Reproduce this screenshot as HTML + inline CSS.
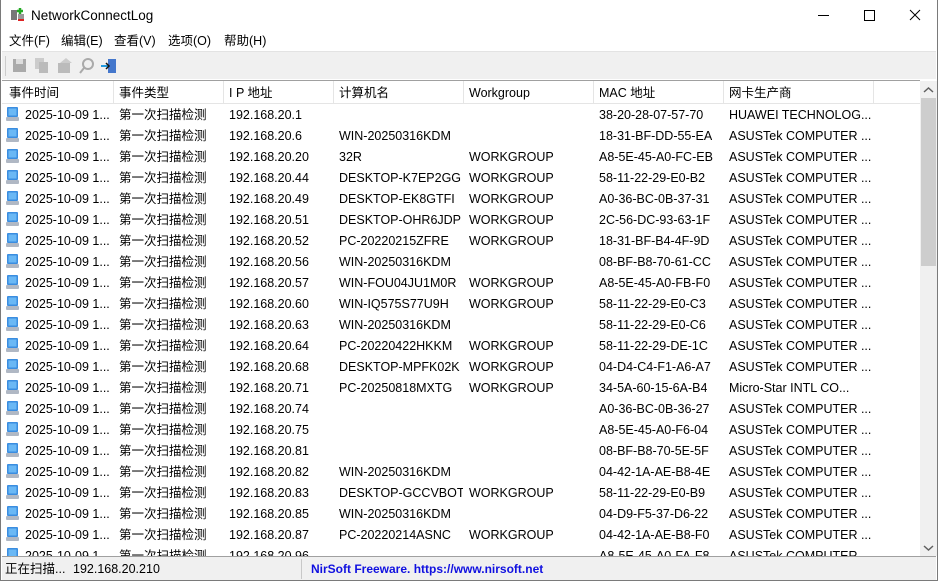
<!DOCTYPE html>
<html><head><meta charset="utf-8"><style>
*{margin:0;padding:0;box-sizing:border-box}
body{width:938px;height:581px;overflow:hidden;background:#fff;font-family:"Liberation Sans","Noto Sans CJK SC",sans-serif;font-size:12.5px;line-height:15px;color:#000;position:relative}
.win{position:absolute;left:0;top:0;width:938px;height:581px;border-right:1px solid #7a7a7a;border-left:1px solid #7a7a7a;border-bottom:1px solid #7a7a7a}
.title{position:absolute;left:30px;top:8px;font-size:13.5px}
.menu span{position:absolute;top:34px;font-size:12.5px}
.tb{position:absolute;left:1px;right:1px;top:51px;height:28px;background:#f0f0f0;border-top:1px solid #e3e3e3}
.list{position:absolute;left:1px;top:80px;width:918px;height:476px;overflow:hidden;border-top:1px solid #a0a0a0}
.hdr{height:23px;position:relative;border-bottom:1px solid #e5e5e5}
.hdr div{position:absolute;top:5px;white-space:nowrap}
.sep{position:absolute;top:0;width:1px;height:22px;background:#e5e5e5}
.row{height:21px;position:relative}
.row div{position:absolute;top:4px;white-space:nowrap;overflow:hidden}
.ic{position:absolute;left:4px;top:3px;width:13px;height:14px}
.sb{position:absolute;left:919px;top:81px;width:17px;height:475px;background:#f0f0f0}
.th{position:absolute;left:920px;top:98px;width:15px;height:168px;background:#cdcdcd}
.st{position:absolute;left:1px;right:1px;top:556px;height:24px;background:#f0f0f0;border-top:1px solid #a0a0a0}
</style></head><body>
<div class="win">
<svg style="position:absolute;left:9px;top:7px" width="16" height="16"><rect x="1" y="3" width="6" height="10" fill="#777"/><rect x="8" y="7" width="6" height="6" fill="#999"/><path d="M10 1v6M7 4h6" stroke="#2a2" stroke-width="2.5"/><rect x="8" y="12" width="6" height="2" fill="#d22"/></svg>
<div class="title">NetworkConnectLog</div>
<svg style="position:absolute;left:812px;top:8px" width="120" height="16"><path d="M5 7.5h11" stroke="#000"/><rect x="51.5" y="2.5" width="10" height="10" fill="none" stroke="#000"/><path d="M97 2l10 10M107 2l-10 10" stroke="#000"/></svg>
<div class="menu"><span style="left:8px">文件(F)</span><span style="left:60px">编辑(E)</span><span style="left:113px">查看(V)</span><span style="left:167px">选项(O)</span><span style="left:223px">帮助(H)</span></div>
<div class="tb">
<div style="position:absolute;left:3px;top:4px;width:1px;height:20px;background:#ccc"></div>
<svg style="position:absolute;left:10px;top:5px" width="110" height="18"><rect x="1" y="2" width="13" height="13" fill="#aaa"/><rect x="4" y="2" width="7" height="5" fill="#ddd"/><rect x="23" y="1" width="9" height="11" fill="#ccc"/><rect x="27" y="5" width="9" height="11" fill="#bbb"/><rect x="46" y="6" width="12" height="10" fill="#bbb"/><path d="M48 6l6-5 6 5" fill="#ccc"/><circle cx="76" cy="7" r="5" fill="none" stroke="#aaa" stroke-width="2"/><path d="M72 11l-4 5" stroke="#aaa" stroke-width="2"/><rect x="96" y="2" width="8" height="14" fill="#4477cc"/><path d="M89 9h8" stroke="#2299dd" stroke-width="2"/><path d="M94 6l3 3-3 3" fill="none" stroke="#111" stroke-width="1.5"/></svg>
</div>
<div class="list">
<div class="hdr"><div style="left:7px">事件时间</div><div style="left:117px">事件类型</div><div style="left:227px">I P 地址</div><div style="left:337px">计算机名</div><div style="left:467px">Workgroup</div><div style="left:597px">MAC 地址</div><div style="left:727px">网卡生产商</div>
<i class="sep" style="left:111px"></i><i class="sep" style="left:221px"></i><i class="sep" style="left:331px"></i><i class="sep" style="left:461px"></i><i class="sep" style="left:591px"></i><i class="sep" style="left:721px"></i><i class="sep" style="left:871px"></i></div>
<div id="rows"></div>
</div>
<div class="sb"></div><div class="th"></div>
<svg style="position:absolute;left:922px;top:86px" width="11" height="8"><path d="M1 6l4.5-4 4.5 4" fill="none" stroke="#606060" stroke-width="1.5"/></svg>
<svg style="position:absolute;left:922px;top:544px" width="11" height="8"><path d="M1 2l4.5 4 4.5-4" fill="none" stroke="#606060" stroke-width="1.5"/></svg>
<div class="st">
<div style="position:absolute;left:3px;top:5px">正在扫描...</div>
<div style="position:absolute;left:71px;top:5px">192.168.20.210</div>
<div style="position:absolute;left:299px;top:2px;width:1px;height:20px;background:#c8c8c8"></div>
<div style="position:absolute;left:309px;top:5px;color:#1010e0;font-weight:bold;font-size:12px">NirSoft Freeware. https://www.nirsoft.net</div>
</div>
</div>
<script>
var d=[["192.168.20.1","","","38-20-28-07-57-70","HUAWEI TECHNOLOG..."],["192.168.20.6","WIN-20250316KDM","","18-31-BF-DD-55-EA","ASUSTek COMPUTER ..."],["192.168.20.20","32R","WORKGROUP","A8-5E-45-A0-FC-EB","ASUSTek COMPUTER ..."],["192.168.20.44","DESKTOP-K7EP2GG","WORKGROUP","58-11-22-29-E0-B2","ASUSTek COMPUTER ..."],["192.168.20.49","DESKTOP-EK8GTFI","WORKGROUP","A0-36-BC-0B-37-31","ASUSTek COMPUTER ..."],["192.168.20.51","DESKTOP-OHR6JDP","WORKGROUP","2C-56-DC-93-63-1F","ASUSTek COMPUTER ..."],["192.168.20.52","PC-20220215ZFRE","WORKGROUP","18-31-BF-B4-4F-9D","ASUSTek COMPUTER ..."],["192.168.20.56","WIN-20250316KDM","","08-BF-B8-70-61-CC","ASUSTek COMPUTER ..."],["192.168.20.57","WIN-FOU04JU1M0R","WORKGROUP","A8-5E-45-A0-FB-F0","ASUSTek COMPUTER ..."],["192.168.20.60","WIN-IQ575S77U9H","WORKGROUP","58-11-22-29-E0-C3","ASUSTek COMPUTER ..."],["192.168.20.63","WIN-20250316KDM","","58-11-22-29-E0-C6","ASUSTek COMPUTER ..."],["192.168.20.64","PC-20220422HKKM","WORKGROUP","58-11-22-29-DE-1C","ASUSTek COMPUTER ..."],["192.168.20.68","DESKTOP-MPFK02K","WORKGROUP","04-D4-C4-F1-A6-A7","ASUSTek COMPUTER ..."],["192.168.20.71","PC-20250818MXTG","WORKGROUP","34-5A-60-15-6A-B4","Micro-Star INTL CO..."],["192.168.20.74","","","A0-36-BC-0B-36-27","ASUSTek COMPUTER ..."],["192.168.20.75","","","A8-5E-45-A0-F6-04","ASUSTek COMPUTER ..."],["192.168.20.81","","","08-BF-B8-70-5E-5F","ASUSTek COMPUTER ..."],["192.168.20.82","WIN-20250316KDM","","04-42-1A-AE-B8-4E","ASUSTek COMPUTER ..."],["192.168.20.83","DESKTOP-GCCVBOT","WORKGROUP","58-11-22-29-E0-B9","ASUSTek COMPUTER ..."],["192.168.20.85","WIN-20250316KDM","","04-D9-F5-37-D6-22","ASUSTek COMPUTER ..."],["192.168.20.87","PC-20220214ASNC","WORKGROUP","04-42-1A-AE-B8-F0","ASUSTek COMPUTER ..."],["192.168.20.96","","","A8-5E-45-A0-FA-F8","ASUSTek COMPUTER ..."]];
var h="";d.forEach(function(r){h+='<div class="row"><svg class="ic" viewBox="0 0 13 14"><rect x="1" y="0" width="11" height="10" rx="1" fill="#3a8de0"/><rect x="2.5" y="1.5" width="8" height="7" fill="#6ab8f5"/><rect x="0" y="10" width="13" height="4" rx="1" fill="#b0b8c4"/></svg><div style="left:23px">2025-10-09 1...</div><div style="left:117px">第一次扫描检测</div><div style="left:227px">'+r[0]+'</div><div style="left:337px;max-width:124px">'+r[1]+'</div><div style="left:467px">'+r[2]+'</div><div style="left:597px">'+r[3]+'</div><div style="left:727px">'+r[4]+'</div></div>'});
document.getElementById("rows").innerHTML=h;
</script>
</body></html>
